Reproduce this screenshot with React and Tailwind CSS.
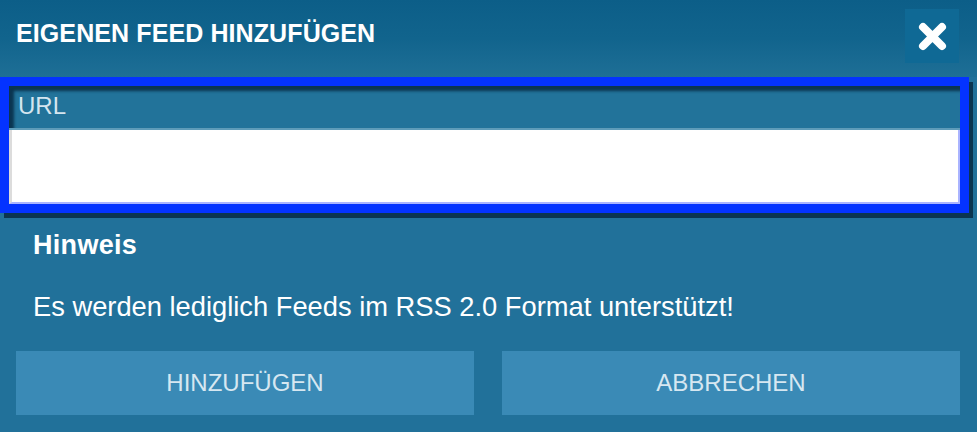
export default function App() {
  return (
    <div className="w-[977px] h-[432px] bg-[#21719a] font-['Liberation_Sans',Arial,sans-serif] overflow-hidden">
      <div className="h-[77px] bg-gradient-to-b from-[#0c5e88] via-[#11648d] to-[#1e6f96] flex items-start justify-between pl-[16px] pr-[18px]">
        <h1 className="mt-[19px] text-[25px] leading-[28px] font-bold text-white tracking-[0.1px]">
          EIGENEN FEED HINZUFÜGEN
        </h1>
        <button className="mt-[9px] w-[54px] h-[54px] bg-[#0f6995] flex items-center justify-center">
          <svg width="29" height="29" viewBox="0 0 29 29">
            <path d="M5 5 L24 24 M24 5 L5 24" stroke="white" strokeWidth="8" strokeLinecap="round" />
          </svg>
        </button>
      </div>
      <div className="mr-[8px] bg-[#0433ff] p-[9px] shadow-[4px_5px_0_#0b3550]">
        <div className="bg-[#22739a] shadow-[inset_5px_5px_3px_#0b3550]">
          <div className="h-[42px] pl-[9px] pt-[6px] text-[24px] leading-[28px] text-[#d4e5ef]">URL</div>
          <div className="h-[2px] bg-[#5e9cb9]" />
          <div className="h-[74px] bg-white border-l-[3px] border-l-[#dcdcdc] border-b-2 border-b-[#aab4ff] border-r-2 border-r-[#aab4ff]" />
        </div>
      </div>
      <div className="pl-[33px] pt-[17px]">
        <div className="text-[27px] leading-[31px] font-bold text-white tracking-[0.3px]">Hinweis</div>
        <div className="mt-[30px] text-[27.3px] leading-[31px] text-white">
          Es werden lediglich Feeds im RSS 2.0 Format unterstützt!
        </div>
      </div>
      <div className="mt-[29px] pl-[16px] pr-[17px] grid grid-cols-2 gap-[28px]">
        <button className="h-[64px] bg-[#3a8ab6] text-[24px] leading-[28px] text-[#d6e7f1]">
          HINZUFÜGEN
        </button>
        <button className="h-[64px] bg-[#3a8ab6] text-[24px] leading-[28px] text-[#d6e7f1]">
          ABBRECHEN
        </button>
      </div>
    </div>
  );
}
